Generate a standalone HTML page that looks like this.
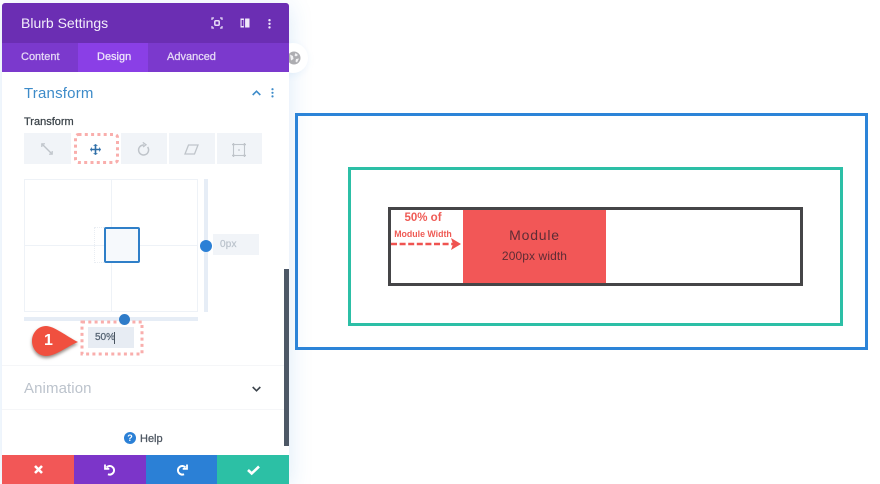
<!DOCTYPE html>
<html>
<head>
<meta charset="utf-8">
<style>
html,body{margin:0;padding:0;background:#fff}
body{width:880px;height:484px;position:relative;overflow:hidden;font-family:"Liberation Sans",sans-serif}
#w{position:absolute;left:0;top:0;width:880px;height:484px;overflow:hidden;filter:blur(.3px)}
.a{position:absolute;box-sizing:border-box}
.t{position:absolute;white-space:nowrap;line-height:1}
.m{-webkit-text-stroke:.25px currentColor}
svg{position:absolute;overflow:visible}
</style>
</head>
<body>
<div id="w">
<!-- panel shadow -->
<div class="a" style="left:2px;top:3px;width:287px;height:481px;box-shadow:0 4px 22px rgba(43,130,211,.17)"></div>

<!-- globe button -->
<div class="a" style="left:278px;top:43px;width:30px;height:30px;border-radius:50%;background:#fff;box-shadow:0 2px 8px rgba(43,130,211,.08)"></div>
<svg style="left:287px;top:51px" width="14" height="14" viewBox="0 0 14 14"><circle cx="7" cy="7" r="6.500" fill="#adadb1"/><path d="M3 3.500l3 1.500 .5 3-2.500 1.500zM8.500 2l2.500 2-2 1.500-1.500-1zM9 8l3-.5-2 4-1.500-1z" fill="#f2f2f4"/></svg>

<!-- diagram -->
<div class="a" style="left:295px;top:113px;width:573px;height:237px;border:3px solid #2c84d8"></div>
<div class="a" style="left:348px;top:167px;width:495px;height:159px;border:3px solid #2cbfa6"></div>
<div class="a" style="left:388px;top:207px;width:415px;height:79px;border:3px solid #454547"></div>
<div class="a" style="left:463px;top:210px;width:143px;height:73px;background:#f25757"></div>
<div class="t" style="left:463px;width:143px;text-align:center;top:228px;font-size:14px;letter-spacing:.8px;color:#5e2c35">Module</div>
<div class="t" style="left:463px;width:143px;text-align:center;top:250px;font-size:12px;letter-spacing:.1px;color:#5e2c35">200px width</div>
<div class="t" style="left:387px;width:72px;text-align:center;top:213px;font-size:11.500px;font-weight:700;color:#ef5b55">50% of</div>
<div class="t" style="left:387px;width:72px;text-align:center;top:230px;font-size:8.800px;font-weight:700;color:#ef5b55">Module Width</div>
<svg style="left:391px;top:237px" width="72" height="14" viewBox="0 0 72 14"><path d="M0 7H62" stroke="#ef5350" stroke-width="2.500" stroke-dasharray="6 2.600" fill="none"/><path d="M60 1l10 6-10 6 2-6z" fill="#ef5350"/></svg>

<!-- panel -->
<div class="a" style="left:2px;top:3px;width:287px;height:481px;background:#fff;border-radius:3px 3px 0 0;overflow:hidden">
  <div class="a" style="left:0;top:0;width:287px;height:40px;background:#6b2eb3"></div>
  <div class="a" style="left:0;top:40px;width:287px;height:29px;background:#7b39cd"></div>
  <div class="a" style="left:76px;top:40px;width:70px;height:29px;background:#8a3fe6"></div>
</div>
<div class="t" style="left:21px;top:16px;font-size:14px;color:#f3eefb">Blurb Settings</div>
<svg style="left:211px;top:17px" width="12" height="12" viewBox="0 0 12 12" fill="none" stroke="#e9def8" stroke-width="1.200"><path d="M1 3V1h2M9 1h2v2M11 9v2H9M3 11H1V9"/><rect x="3.800" y="3.800" width="4.400" height="4.400" rx="1" stroke-width="1.500"/></svg>
<svg style="left:240px;top:18px" width="10" height="10" viewBox="0 0 10 10"><rect x=".5" y=".5" width="9" height="9" fill="#f0e8fa"/><path d="M4.500 0V10" stroke="#6b2eb3" stroke-width="1.200"/><rect x="1.600" y="2" width="1.800" height="6" fill="#6b2eb3"/></svg>
<svg style="left:268px;top:19px" width="3" height="10" viewBox="0 0 3 10" fill="#efe7fa"><circle cx="1.500" cy="1.200" r="1.200"/><circle cx="1.500" cy="4.800" r="1.200"/><circle cx="1.500" cy="8.400" r="1.200"/></svg>
<div class="t m" style="left:21px;top:52px;font-size:11px;color:#e6daf6">Content</div>
<div class="t m" style="left:97px;top:52px;font-size:11px;color:#efe6fb">Design</div>
<div class="t m" style="left:167px;top:52px;font-size:11px;color:#e6daf6">Advanced</div>

<!-- Transform section -->
<div class="t" style="left:24px;top:86px;font-size:15px;letter-spacing:.2px;color:#3d8bc9">Transform</div>
<svg style="left:252px;top:90px" width="9" height="6" viewBox="0 0 9 6" fill="none" stroke="#3d8bc9" stroke-width="1.600"><path d="M.7 5L4.500 1.200 8.300 5"/></svg>
<svg style="left:271px;top:88px" width="3" height="10" viewBox="0 0 3 10" fill="#3d8bc9"><circle cx="1.500" cy="1.200" r="1.100"/><circle cx="1.500" cy="4.800" r="1.100"/><circle cx="1.500" cy="8.400" r="1.100"/></svg>
<div class="t m" style="left:24px;top:117px;font-size:11px;color:#3a4248">Transform</div>

<div class="a" style="left:24px;top:133px;width:238px;height:31px;background:#f1f4f8"></div>
<div class="a" style="left:71px;top:133px;width:2px;height:31px;background:#fff"></div>
<div class="a" style="left:119px;top:133px;width:2px;height:31px;background:#fff"></div>
<div class="a" style="left:167px;top:133px;width:2px;height:31px;background:#fff"></div>
<div class="a" style="left:215px;top:133px;width:2px;height:31px;background:#fff"></div>
<div class="a" style="left:73px;top:133px;width:46px;height:31px;background:#fff"></div>
<svg style="left:74px;top:133px" width="45" height="31" viewBox="0 0 45 31" fill="none"><rect x="1.500" y="1.500" width="42" height="28" rx="3" stroke="#f9aeac" stroke-width="3" stroke-dasharray="3 3.300"/></svg>
<svg style="left:41px;top:143px" width="12" height="12" viewBox="0 0 12 12" fill="none" stroke="#bfc4ca" stroke-width="1.400"><path d="M1.500 1.500L10.500 10.500"/><path d="M.8 4V.8H4M8 11.200h3.200V8" stroke-width="1.200"/></svg>
<svg style="left:90px;top:144px" width="11" height="11" viewBox="0 0 11 11" fill="#2f6fa8"><path d="M4.700 1.800h1.600v2.900h2.900V3l1.800 2.500L9.200 8V6.300H6.300v2.900H8L5.500 11 3 9.200h1.700V6.300H1.800V8L0 5.500 1.800 3v1.700h2.900V1.800H3L5.500 0 8 1.800z"/></svg>
<svg style="left:137px;top:142px" width="13" height="14" viewBox="0 0 13 14" fill="none" stroke="#bfc4ca" stroke-width="1.500"><path d="M10.600 5a5 5 0 1 1-3.600-2"/><path d="M5.800 .4L9 2.800 6 5" stroke-width="1.300"/></svg>
<svg style="left:184px;top:144px" width="15" height="11" viewBox="0 0 15 11" fill="none" stroke="#bfc4ca" stroke-width="1.300"><path d="M4.500 1H14L10.500 10H1z"/></svg>
<svg style="left:232px;top:143px" width="14" height="14" viewBox="0 0 14 14" fill="none" stroke="#bfc4ca" stroke-width="1.100"><rect x="1.500" y="1.500" width="11" height="11"/><path d="M0 1.500h3M1.500 0v3M11 1.500h3M12.500 0v3M0 12.500h3M1.500 11v3M11 12.500h3M12.500 11v3" stroke-width="1.200"/><circle cx="7" cy="7" r=".9" fill="#bfc4ca" stroke="none"/></svg>

<!-- transform grid -->
<div class="a" style="left:24px;top:179px;width:174px;height:133px;border:1px solid #eef2f7"></div>
<div class="a" style="left:111px;top:179px;width:1px;height:133px;background:#eef2f7"></div>
<div class="a" style="left:24px;top:245px;width:174px;height:1px;background:#eef2f7"></div>
<div class="a" style="left:94px;top:227px;width:36px;height:36px;border:1px dotted #e9edf2"></div>
<div class="a" style="left:104px;top:227px;width:36px;height:36px;border:2px solid #2f7fc8;border-radius:2px;background:#f6f9fc"></div>
<div class="a" style="left:204px;top:179px;width:4px;height:133px;background:#e6edf6"></div>
<div class="a" style="left:24px;top:317px;width:174px;height:4px;background:#e6edf6"></div>
<div class="a" style="left:200px;top:240px;width:12px;height:12px;border-radius:50%;background:#2b80d6"></div>
<div class="a" style="left:213px;top:234px;width:46px;height:21px;background:#f1f4f8"></div>
<div class="t m" style="left:220px;top:240px;font-size:10px;letter-spacing:.2px;color:#bcc4cd">0px</div>

<!-- 50% input -->
<svg style="left:80px;top:320px" width="64" height="36" viewBox="0 0 64 36" fill="none"><rect x="2" y="2" width="60" height="32" stroke="#f9aeac" stroke-width="3" stroke-dasharray="3 3.300"/></svg>
<div class="a" style="left:88px;top:327px;width:46px;height:21px;background:#e7ecf3"></div>
<div class="t m" style="left:95px;top:333px;font-size:10px;color:#566473">50%</div>
<div class="a" style="left:114px;top:332px;width:1px;height:12px;background:#4a5560"></div>
<div class="a" style="left:119px;top:314px;width:11px;height:11px;border-radius:50%;background:#2f7cc9"></div>

<!-- callout -->
<svg style="left:30px;top:324px;filter:drop-shadow(0 2px 1.500px rgba(60,40,30,.55))" width="50" height="34" viewBox="0 0 50 34"><path d="M16 2C24 2 36 12 48 18 36 23 26 32 16 32 8 32 2 25 2 17S8 2 16 2Z" fill="#f0503f"/></svg>
<div class="t" style="left:44px;top:333px;font-size:16px;font-weight:700;color:#fff">1</div>

<!-- dividers -->
<div class="a" style="left:2px;top:365px;width:282px;height:1px;background:#f5f6f8"></div>
<div class="a" style="left:2px;top:409px;width:282px;height:1px;background:#f5f6f8"></div>

<!-- Animation -->
<div class="t" style="left:24px;top:381px;font-size:15px;letter-spacing:.1px;color:#bcc3cc">Animation</div>
<svg style="left:252px;top:386px" width="9" height="6" viewBox="0 0 9 6" fill="none" stroke="#3b434b" stroke-width="1.600"><path d="M.7 1L4.500 4.800 8.300 1"/></svg>

<!-- Help -->
<div class="a" style="left:124px;top:432px;width:12px;height:12px;border-radius:50%;background:#2b80d6"></div>
<div class="t" style="left:124px;width:12px;text-align:center;top:434px;font-size:9px;font-weight:700;color:#fff">?</div>
<div class="t m" style="left:140px;top:434px;font-size:11px;color:#4c5560">Help</div>

<!-- scrollbar -->
<div class="a" style="left:284px;top:269px;width:5px;height:177px;background:#4d5866"></div>

<!-- footer -->
<div class="a" style="left:2px;top:455px;width:72px;height:29px;background:#f25757"></div>
<div class="a" style="left:74px;top:455px;width:72px;height:29px;background:#7c35c9"></div>
<div class="a" style="left:146px;top:455px;width:71px;height:29px;background:#2b80d6"></div>
<div class="a" style="left:217px;top:455px;width:72px;height:29px;background:#2cc0a5"></div>
<svg style="left:34px;top:465px" width="9" height="9" viewBox="0 0 9 9" fill="none" stroke="#fff" stroke-width="2.600"><path d="M1 1L8 8M8 1L1 8"/></svg>
<svg style="left:104px;top:464px" width="12" height="12" viewBox="0 0 12 12" fill="none" stroke="#fff" stroke-width="2"><path d="M2.500 3.500A4.300 4.300 0 1 1 4 10.200"/><path d="M1 .5V4.800H5.300" stroke-width="1.800"/></svg>
<svg style="left:176px;top:464px" width="12" height="12" viewBox="0 0 12 12" fill="none" stroke="#fff" stroke-width="2"><path d="M9.500 3.500A4.300 4.300 0 1 0 8 10.200"/><path d="M11 .5V4.800H6.700" stroke-width="1.800"/></svg>
<svg style="left:247px;top:465px" width="13" height="10" viewBox="0 0 13 10" fill="none" stroke="#fff" stroke-width="2.600"><path d="M1 5L4.700 8.500 12 1.500"/></svg>
</div>
</body>
</html>
